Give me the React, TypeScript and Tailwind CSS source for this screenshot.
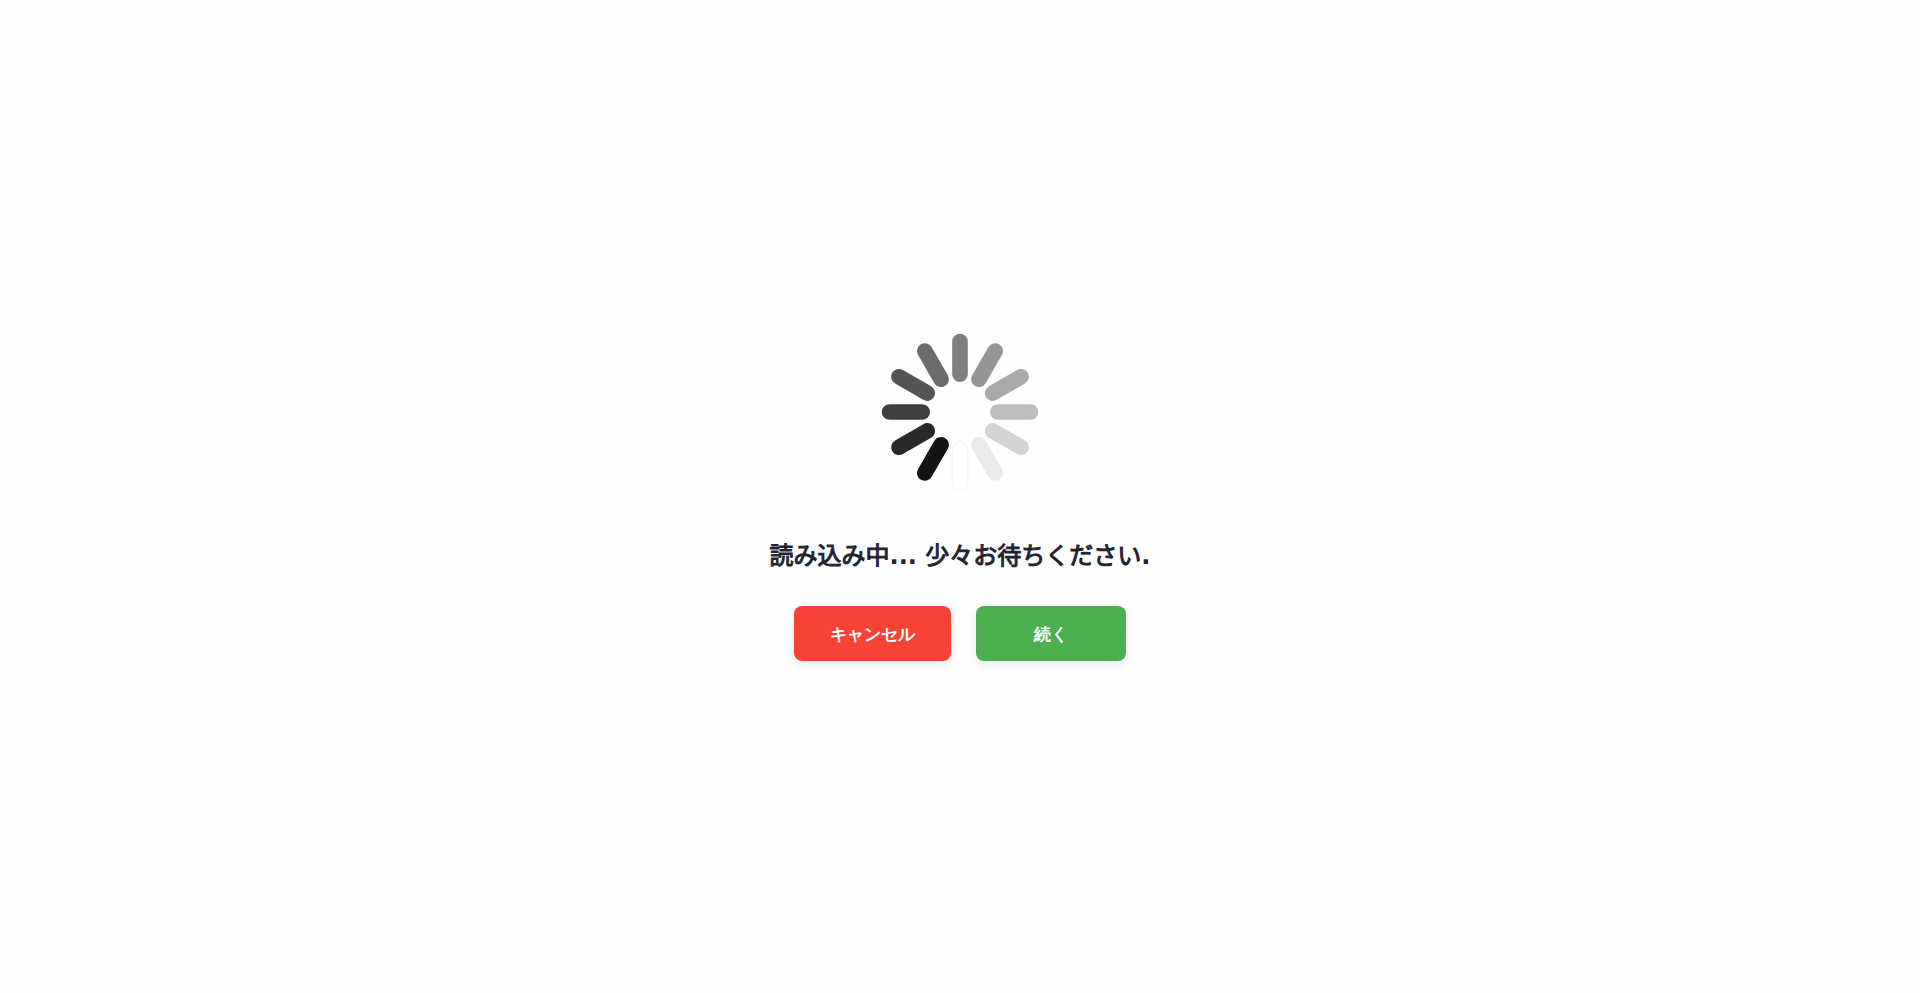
const spokes = [
  '#7f7f7f',
  '#959595',
  '#a9a9a9',
  '#bebebe',
  '#d3d3d3',
  '#e9e9e9',
  '#ffffff',
  '#141414',
  '#292929',
  '#3f3f3f',
  '#545454',
  '#6a6a6a',
];

function Spinner() {
  return (
    <svg className="size-[200px]" viewBox="-100 -100 200 200" role="img" aria-label="読み込み中">
      {spokes.map((fill, i) => (
        <rect
          key={fill}
          x="-7.8"
          y="-78.3"
          width="15.6"
          height="48.3"
          rx="7.8"
          fill={fill}
          stroke={i === 6 ? '#ececec' : 'none'}
          strokeWidth="0.7"
          transform={`rotate(${i * 30})`}
        />
      ))}
    </svg>
  );
}

const buttonClass =
  "h-[55px] cursor-pointer rounded-lg pt-[2px] text-center font-['DejaVu_Sans',sans-serif] text-[17px] font-semibold text-white shadow-[0_4px_12px_rgba(0,0,0,0.08)]";

export default function App() {
  return (
    <main
      lang="ja"
      className="flex min-h-screen flex-col items-center justify-center bg-[#fefefe] pb-5 font-['DejaVu_Sans','Noto_Sans_CJK_JP',sans-serif]"
    >
      <Spinner />
      <p className="mt-[26px] text-[24px] leading-9 text-[#222230] [-webkit-text-stroke:1px_#222230]" role="status">
        読み込み中<span className="font-bold [-webkit-text-stroke:0]">... </span>
        少々お待ちください<span className="font-bold [-webkit-text-stroke:0]">.</span>
      </p>
      <div className="mt-8 flex gap-[25px]">
        <button type="button" className={`${buttonClass} w-[157px] bg-[#f64336]`}>
          キャンセル
        </button>
        <button type="button" className={`${buttonClass} w-[150px] bg-[#4caf50]`}>
          続く
        </button>
      </div>
    </main>
  );
}
